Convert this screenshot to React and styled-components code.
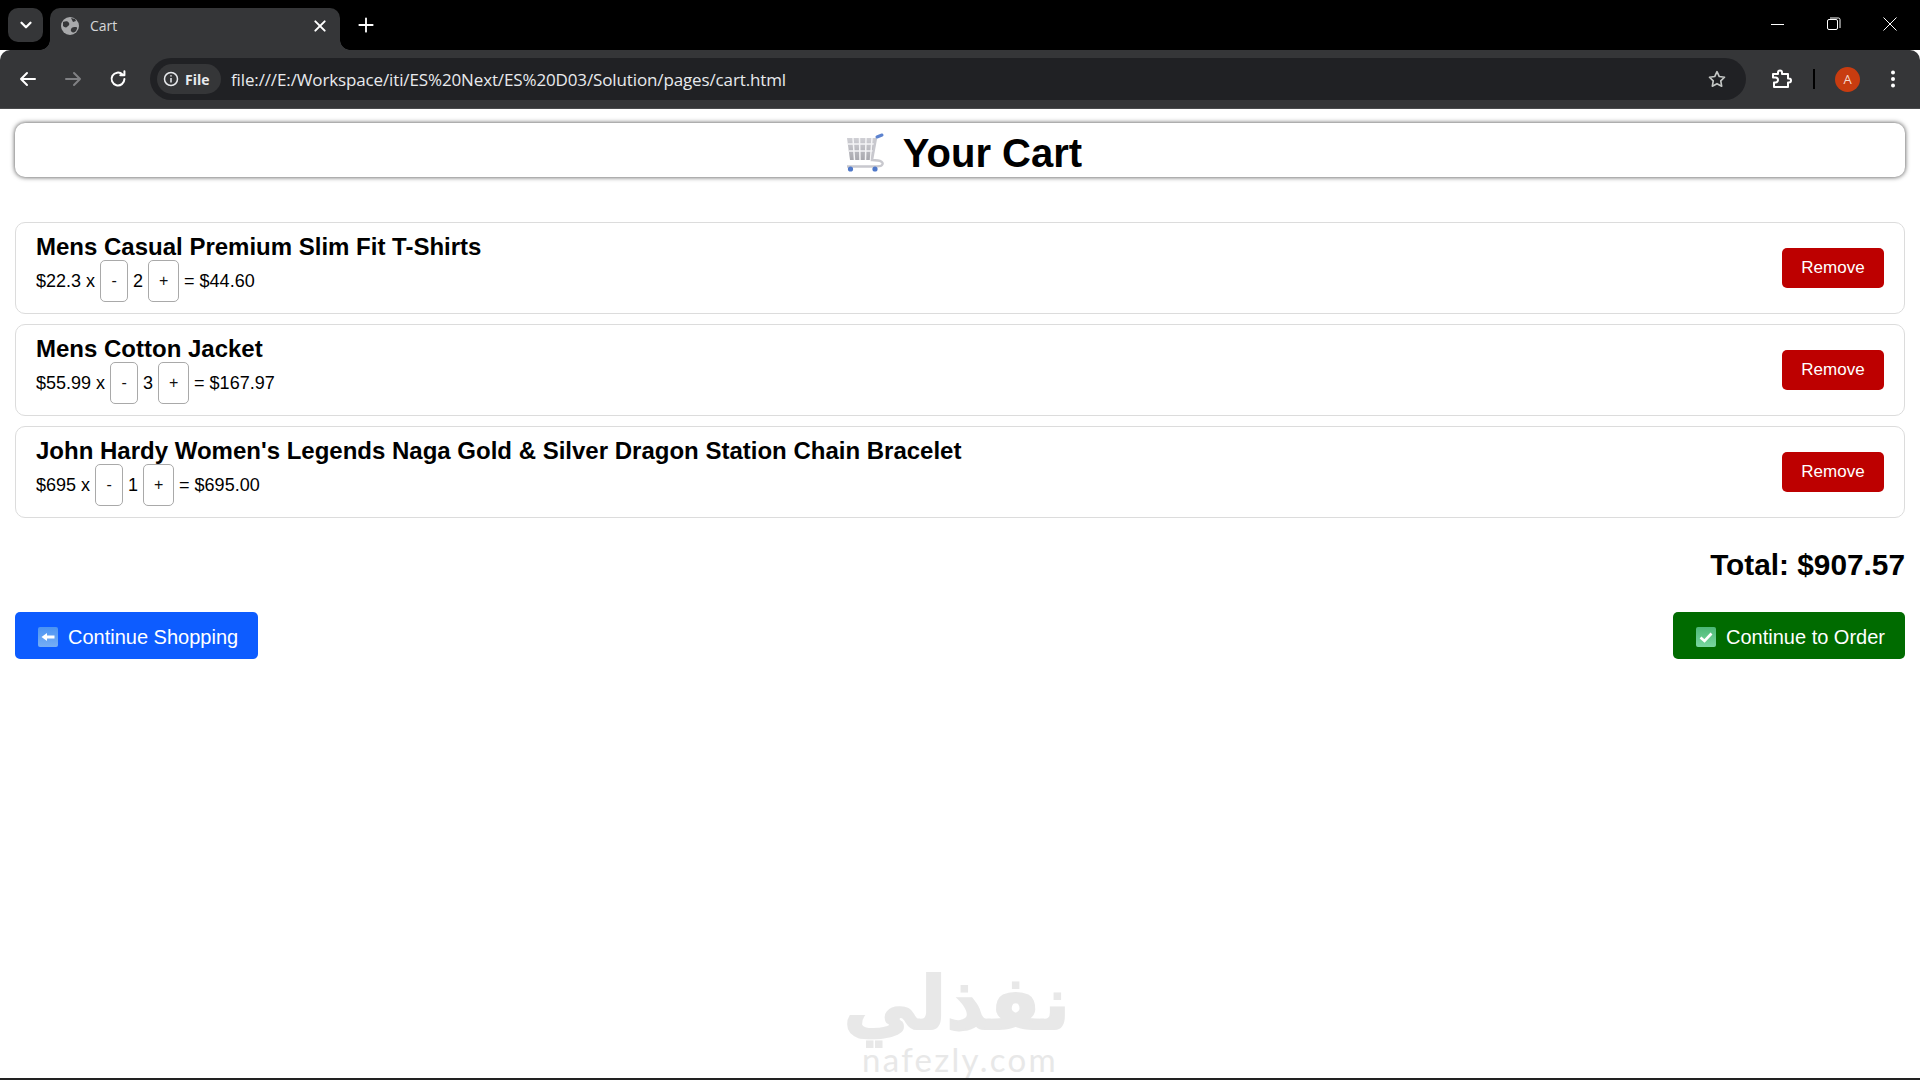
import React from "react";
import styled, { createGlobalStyle } from "styled-components";

const Global = createGlobalStyle`
  html, body { margin: 0; padding: 0; background: #fff; }
  body { font-family: "Liberation Sans", Arial, sans-serif; color: #000; }
`;

const Screen = styled.div`
  position: relative;
  width: 1920px;
  height: 1080px;
  overflow: hidden;
  display: flex;
  flex-direction: column;
  background: #fff;
`;
const TabStrip = styled.div`
  height: 50px;
  background: #000;
  display: flex;
  align-items: flex-start;
  flex: none;
`;
const TabSearch = styled.div`
  width: 35px;
  height: 34px;
  margin: 8px 0 0 8px;
  border-radius: 10px;
  background: #353638;
  display: flex;
  align-items: center;
  justify-content: center;
  color: #fff;
`;
const Tab = styled.div`
  position: relative;
  width: 290px;
  height: 42px;
  margin: 8px 0 0 7px;
  padding: 0 12px 6px 11px;
  box-sizing: border-box;
  background: #353638;
  border-radius: 10px 10px 0 0;
  display: flex;
  align-items: center;
  gap: 11px;
  color: #d5d6d8;
  font: 14px "Open Sans", sans-serif;
  &::before, &::after {
    content: "";
    position: absolute;
    bottom: 0;
    width: 10px;
    height: 10px;
    background: radial-gradient(circle at var(--cx) 0, #000 9.5px, #353638 10px);
  }
  &::before { left: -10px; --cx: 0; }
  &::after { right: -10px; --cx: 100%; }
`;
const TabTitle = styled.span`
  flex: 1;
  margin-bottom: 1px;
`;
const NewTab = styled.div`
  margin: 13px 0 0 14px;
  width: 24px;
  height: 24px;
  display: flex;
  align-items: center;
  justify-content: center;
`;
const WindowControls = styled.div`
  margin-left: auto;
  display: flex;
  margin-top: 12px;
  padding-right: 2px;
`;
const WinButton = styled.div`
  width: 56px;
  height: 24px;
  display: flex;
  align-items: center;
  justify-content: center;
`;
const Toolbar = styled.div`
  height: 59px;
  flex: none;
  background: #353638;
  border-radius: 10px 10px 0 0;
  border-bottom: 1px solid #4a4b4d;
  box-sizing: border-box;
  display: flex;
  align-items: center;
  padding: 0 0 0 16px;
`;
const NavButton = styled.div`
  width: 24px;
  height: 24px;
  margin-right: ${(p) => p.$gap || 21}px;
  display: flex;
  align-items: center;
  justify-content: center;
`;
const Omnibox = styled.div`
  width: 1596px;
  height: 42px;
  border-radius: 21px;
  background: #202124;
  display: flex;
  align-items: center;
  padding: 0 18px 0 7px;
  box-sizing: border-box;
  flex: none;
`;
const Chip = styled.div`
  height: 30px;
  width: 64px;
  border-radius: 15px;
  background: #353638;
  display: flex;
  align-items: center;
  gap: 6px;
  padding-left: 6px;
  box-sizing: border-box;
  color: #e8eaed;
  font: 700 14px "Open Sans", sans-serif;
  flex: none;
`;
const Url = styled.span`
  margin-left: 10px;
  flex: 1;
  color: #e8eaed;
  font: 17px "Open Sans", sans-serif;
  letter-spacing: -0.13px;
  white-space: nowrap;
`;
const ToolbarRight = styled.div`
  display: flex;
  align-items: center;
  flex: none;
`;
const ExtIcon = styled.div`
  margin-left: 23px;
  width: 24px;
  height: 24px;
`;
const Divider = styled.div`
  width: 2px;
  height: 20px;
  margin-left: 20px;
  background: #000;
`;
const Avatar = styled.div`
  width: 25px;
  height: 25px;
  margin-left: 20px;
  border-radius: 50%;
  background: #c83c10;
  color: #f5d7cb;
  display: flex;
  align-items: center;
  justify-content: center;
  font: 13px "Open Sans", sans-serif;
`;
const Kebab = styled.div`
  width: 24px;
  height: 24px;
  margin-left: 21px;
`;

const Page = styled.main`
  flex: 1;
  padding: 14px 15px 0;
  display: flex;
  flex-direction: column;
`;
const Header = styled.h1`
  margin: 0 0 45px;
  height: 54px;
  box-sizing: border-box;
  padding: 5px 0 0 7px;
  border-radius: 10px;
  background: #fff;
  box-shadow: 0 0 5px rgba(0, 0, 0, 0.75);
  display: flex;
  align-items: center;
  justify-content: center;
  gap: 16px;
  font-size: 40px;
  line-height: 1;
  font-weight: 700;
`;
const Items = styled.div`
  display: flex;
  flex-direction: column;
  gap: 10px;
`;
const Card = styled.article`
  height: 92px;
  box-sizing: border-box;
  border: 1px solid #dcdcdc;
  border-radius: 10px;
  padding: 0 20px;
  display: flex;
  align-items: center;
  justify-content: space-between;
`;
const Details = styled.div`
  padding-bottom: 2px;
`;
const Name = styled.h3`
  margin: 0;
  font-size: 24px;
  line-height: 28px;
  font-weight: 700;
`;
const Line = styled.div`
  display: flex;
  align-items: center;
  font-size: 18px;
  height: 41px;
`;
const Qty = styled.span`
  margin: 0 5px;
`;
const QtyButton = styled.button`
  width: ${(p) => p.$w}px;
  height: 42px;
  padding: 0;
  box-sizing: border-box;
  background: #fff;
  color: #111;
  border: 1px solid #a9a9a9;
  border-radius: 5px;
  font: 16px "Liberation Sans", sans-serif;
  margin-right: ${(p) => p.$mr || 0}px;
`;
const Remove = styled.button`
  width: 102px;
  height: 40px;
  border: none;
  border-radius: 5px;
  background: #bd0000;
  color: #fff;
  font: 17px "Liberation Sans", sans-serif;
`;
const Total = styled.h2`
  margin: 29px 0 0;
  text-align: right;
  font-size: 29.8px;
  line-height: 36px;
  font-weight: 700;
`;
const Actions = styled.div`
  display: flex;
  justify-content: space-between;
  margin-top: 29px;
`;
const ActionButton = styled.button`
  height: 47px;
  padding: 3px 20px 0 23px;
  border: none;
  border-radius: 5px;
  background: ${(p) => p.$bg};
  color: #fff;
  display: flex;
  align-items: center;
  gap: 10px;
  font: 20px "Liberation Sans", sans-serif;
`;
const Watermark = styled.div`
  position: absolute;
  left: 850px;
  top: 968px;
  width: 220px;
  text-align: center;
  color: #e8e8e8;
`;
const WatermarkAr = styled.div`
  font: 700 74px/70px "DejaVu Sans", sans-serif;
  -webkit-text-stroke: 2px #e8e8e8;
  direction: rtl;
`;
const WatermarkEn = styled.div`
  font: 33px/32px "Lato", sans-serif;
  letter-spacing: 2.3px;
  margin-top: 5px;
`;
const BottomEdge = styled.div`
  position: absolute;
  left: 0;
  right: 0;
  bottom: 0;
  height: 2px;
  background: #222;
`;

const Stroke = ({ size = 24, sw = 2, color = "#fff", children }) => (
  <svg width={size} height={size} viewBox="0 0 24 24" fill="none" stroke={color} strokeWidth={sw} strokeLinecap="round" strokeLinejoin="round">
    {children}
  </svg>
);

const CartIcon = () => (
  <svg width="42" height="40" viewBox="0 0 42 40">
    <defs>
      <linearGradient id="cg" x1="0" y1="0" x2="0" y2="1">
        <stop offset="0" stopColor="#d0d0d5" />
        <stop offset="1" stopColor="#a8a8ae" />
      </linearGradient>
    </defs>
    <path d="M2 5 H31 L27 27 H5 Z" fill="url(#cg)" />
    <path d="M8 5 L9.5 27 M14.5 5 L15 27 M21 5 L20.5 27 M27 5 L25.5 27 M3 11 H30 M4 18 H28.5" stroke="#f4f4f6" strokeWidth="1.5" />
    <path d="M31 5 L27 27 C37 27 39 30 37 32 C36 34 30 33.5 2 33.5" fill="none" stroke="#c8c8ce" strokeWidth="2.4" />
    <path d="M32 4 L37 2" stroke="#5d83cf" strokeWidth="3" strokeLinecap="round" />
    <circle cx="5.5" cy="36" r="2.6" fill="#4f78c9" />
    <circle cx="30" cy="36" r="2.6" fill="#4f78c9" />
  </svg>
);

const BackEmoji = () => (
  <svg width="20" height="20" viewBox="0 0 20 20">
    <defs>
      <linearGradient id="bg" x1="0" y1="0" x2="0" y2="1">
        <stop offset="0" stopColor="#4b93f2" />
        <stop offset="1" stopColor="#76aef5" />
      </linearGradient>
    </defs>
    <rect width="20" height="20" rx="2" fill="url(#bg)" />
    <path d="M3.5 10 L9 6 V8.6 H16.5 V11.4 H9 V14 Z" fill="#fff" />
  </svg>
);

const CheckEmoji = () => (
  <svg width="20" height="20" viewBox="0 0 20 20">
    <defs>
      <linearGradient id="ck" x1="0" y1="0" x2="0" y2="1">
        <stop offset="0" stopColor="#4cb876" />
        <stop offset="1" stopColor="#79d6a0" />
      </linearGradient>
    </defs>
    <rect width="20" height="20" rx="2" fill="url(#ck)" />
    <path d="M4.5 10.5 L8.5 14 L15.5 6.5" fill="none" stroke="#fff" strokeWidth="2.6" />
  </svg>
);

const items = [
  { name: "Mens Casual Premium Slim Fit T-Shirts", price: "$22.3", qty: 2, sum: "$44.60" },
  { name: "Mens Cotton Jacket", price: "$55.99", qty: 3, sum: "$167.97" },
  { name: "John Hardy Women's Legends Naga Gold & Silver Dragon Station Chain Bracelet", price: "$695", qty: 1, sum: "$695.00" },
];

export default function App() {
  return (
    <Screen>
      <Global />
      <TabStrip>
        <TabSearch>
          <Stroke size={18} sw={3}><path d="M6 9l6 6 6-6" /></Stroke>
        </TabSearch>
        <Tab>
          <svg width="18" height="18" viewBox="0 0 18 18">
            <circle cx="9" cy="9" r="9" fill="#a8a9ab" />
            <path d="M2 5c3-1 5-1 6 1s-1 3-2 4-3 0-4-1zM10 12c1-2 3-2 5-2s1 3-1 5c-2 1-5 0-4-3zM10 1l4 1 1 2-3 1z" fill="#353638" />
          </svg>
          <TabTitle>Cart</TabTitle>
          <Stroke size={16} sw={3}><path d="M5 5l14 14M19 5L5 19" /></Stroke>
        </Tab>
        <NewTab>
          <Stroke size={20} sw={2.2}><path d="M12 4v16M4 12h16" /></Stroke>
        </NewTab>
        <WindowControls>
          <WinButton>
            <svg width="14" height="14" viewBox="0 0 14 14"><path d="M0 7.5H13" stroke="#fff" strokeWidth="1" /></svg>
          </WinButton>
          <WinButton>
            <svg width="14" height="14" viewBox="0 0 14 14" fill="none" stroke="#fff" strokeWidth="1"><rect x="0.5" y="2.5" width="10" height="10" rx="1.5" /><path d="M3 1h8.5a1.5 1.5 0 0 1 1.5 1.5V11" /></svg>
          </WinButton>
          <WinButton>
            <svg width="14" height="14" viewBox="0 0 14 14"><path d="M0.5 0.5L13.5 13.5M13.5 0.5L0.5 13.5" stroke="#fff" strokeWidth="1" /></svg>
          </WinButton>
        </WindowControls>
      </TabStrip>
      <Toolbar>
        <NavButton>
          <Stroke size={24} sw={2}><path d="M19 12H5M11 6l-6 6 6 6" /></Stroke>
        </NavButton>
        <NavButton>
          <Stroke size={24} sw={2} color="#808184"><path d="M5 12h14M13 6l6 6-6 6" /></Stroke>
        </NavButton>
        <NavButton $gap={20}>
          <Stroke size={22} sw={2.2}><path d="M19 12a7 7 0 1 1-2.1-5M19 3.5V8h-4.5" /></Stroke>
        </NavButton>
        <Omnibox>
          <Chip>
            <svg width="16" height="16" viewBox="0 0 16 16" fill="none" stroke="#e8eaed" strokeWidth="1.5">
              <circle cx="8" cy="8" r="6.5" />
              <path d="M8 7v4.5M8 4.2v1.4" />
            </svg>
            File
          </Chip>
          <Url>file:///E:/Workspace/iti/ES%20Next/ES%20D03/Solution/pages/cart.html</Url>
          <Stroke size={22} sw={1.8} color="#c4c7c5"><path d="M12 4l2.5 5.3 5.7.8-4.1 4 1 5.7L12 17.1l-5.1 2.7 1-5.7-4.1-4 5.7-.8z" /></Stroke>
        </Omnibox>
        <ToolbarRight>
          <ExtIcon>
            <Stroke size={24} sw={2}>
              <path d="M4 7h5V5.5a2 2 0 0 1 4 0V7h6v4.5h1a2 2 0 0 1 0 4h-1V20H5v-4.5h1.5a2.5 2.5 0 0 0 0-5H4z" />
            </Stroke>
          </ExtIcon>
          <Divider />
          <Avatar>A</Avatar>
          <Kebab>
            <svg width="24" height="24" viewBox="0 0 24 24" fill="#fff"><circle cx="12" cy="5.5" r="2" /><circle cx="12" cy="12" r="2" /><circle cx="12" cy="18.5" r="2" /></svg>
          </Kebab>
        </ToolbarRight>
      </Toolbar>
      <Page>
        <Header>
          <CartIcon />
          Your Cart
        </Header>
        <Items>
          {items.map((it) => (
            <Card key={it.name}>
              <Details>
                <Name>{it.name}</Name>
                <Line>
                  {it.price} x&nbsp;
                  <QtyButton $w={28}>-</QtyButton>
                  <Qty>{it.qty}</Qty>
                  <QtyButton $w={31} $mr={5}>+</QtyButton>
                  = {it.sum}
                </Line>
              </Details>
              <Remove>Remove</Remove>
            </Card>
          ))}
        </Items>
        <Total>Total: $907.57</Total>
        <Actions>
          <ActionButton $bg="#0d5cff">
            <BackEmoji />
            Continue Shopping
          </ActionButton>
          <ActionButton $bg="#006b00">
            <CheckEmoji />
            Continue to Order
          </ActionButton>
        </Actions>
      </Page>
      <Watermark>
        <WatermarkAr>نفذلي</WatermarkAr>
        <WatermarkEn>nafezly.com</WatermarkEn>
      </Watermark>
      <BottomEdge />
    </Screen>
  );
}
